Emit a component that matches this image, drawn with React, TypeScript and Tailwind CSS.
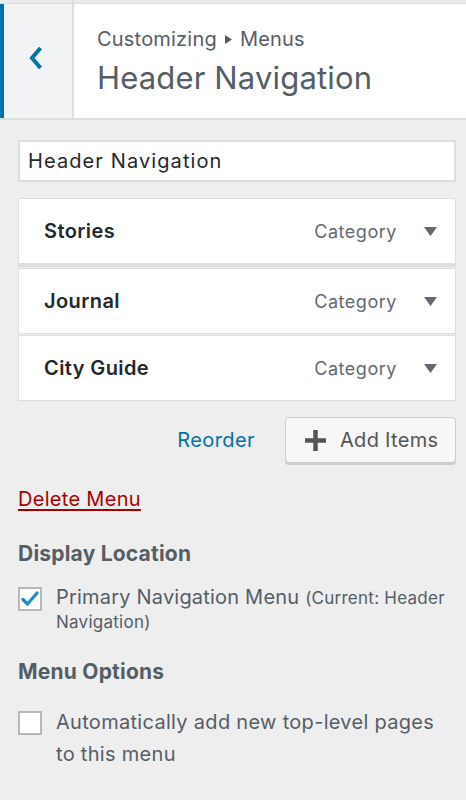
import React from 'react'

const font = { fontFamily: 'Inter, "Noto Sans", sans-serif' }

function MenuItem({ title }: { title: string }) {
  return (
    <div className="flex h-[66px] items-center border border-[#dddddd] bg-white pl-[25px] pr-[18px]">
      <span className="flex-1 text-[20px] font-semibold tracking-[0.02em] text-[#23282d]">{title}</span>
      <span className="text-[18px] tracking-[0.03em] text-[#646970]">Category</span>
      <svg className="ml-[27px] mt-[1px]" width="13" height="9" viewBox="0 0 13 9">
        <path d="M0 0 L13 0 L6.5 9 Z" fill="#646970" />
      </svg>
    </div>
  )
}

function Checkbox({ checked }: { checked?: boolean }) {
  return (
    <span className="mt-[1px] flex h-[24px] w-[24px] shrink-0 items-center justify-center border-2 border-[#b4b9be] bg-white">
      {checked && (
        <svg width="18" height="16" viewBox="0 0 18 16">
          <path d="M2 8.5 L6.5 13 L16 2" fill="none" stroke="#1e8cbe" strokeWidth="3.2" strokeLinecap="round" strokeLinejoin="round" />
        </svg>
      )}
    </span>
  )
}

export default function App() {
  return (
    <div className="h-[800px] w-[466px] overflow-hidden bg-[#eeeeee]" style={font}>
      {/* peek of the previous panel */}
      <div className="flex h-[4px] border-b border-[#dddddd] bg-[#e9e9e9]">
        <div className="w-[74px] border-r-2 border-[#dddddd]" />
      </div>

      {/* header */}
      <div className="flex h-[116px] border-b-2 border-[#dddddd] bg-white">
        <div className="flex w-[74px] items-center border-l-4 border-r-2 border-l-[#0073aa] border-r-[#dddddd] bg-[#f2f3f5] pb-[6px] pl-[24px]">
          <svg width="16" height="24" viewBox="0 0 16 24">
            <path d="M12.5 2 L4 12 L12.5 22" fill="none" stroke="#0073aa" strokeWidth="4" strokeLinejoin="miter" />
          </svg>
        </div>
        <div className="flex flex-col justify-center pl-[23px]">
          <div className="flex items-center text-[20px] leading-[26px] tracking-[0.01em] text-[#555d66]">
            Customizing
            <svg className="mx-[8px]" width="7" height="9" viewBox="0 0 7 9">
              <path d="M0 0 L7 4.5 L0 9 Z" fill="#555d66" />
            </svg>
            Menus
          </div>
          <div className="mt-[8px] text-[31px] leading-[36px] tracking-[0.005em] text-[#555d66]">Header Navigation</div>
        </div>
      </div>

      <div className="pl-[18px] pr-[10px] pt-[20px]">
        <div className="flex h-[42px] items-center border-2 border-[#dddddd] bg-white pl-[8px] text-[20px] tracking-[0.055em] text-[#23282d]">
          Header Navigation
        </div>

        <div className="mt-[16px] flex flex-col gap-[1px]">
          <div className="border-b-[3px] border-[#dddddd]">
            <MenuItem title="Stories" />
          </div>
          <MenuItem title="Journal" />
          <MenuItem title="City Guide" />
        </div>

        <div className="mt-[16px] flex items-center justify-end">
          <span className="mr-[30px] text-[20px] tracking-[0.02em] text-[#0073aa]">Reorder</span>
          <button className="flex h-[46px] w-[171px] items-center rounded-[4px] border border-[#cccccc] bg-[#f7f7f7] pl-[19px] text-[20px] tracking-[0.015em] text-[#555555] shadow-[0_2px_0_#cccccc]">
            <svg width="21" height="21" viewBox="0 0 21 21">
              <path d="M10.5 0 V21 M0 10.5 H21" stroke="#555555" strokeWidth="4.5" />
            </svg>
            <span className="ml-[14px]">Add Items</span>
          </button>
        </div>

        <div className="mt-[23px] text-[20px] leading-[26px] tracking-[0.015em] text-[#aa0000] underline decoration-[2px] underline-offset-[3px]">
          Delete Menu
        </div>

        <div className="mt-[29px] text-[21px] font-bold leading-[26px] tracking-[0.01em] text-[#555d66]">Display Location</div>
        <div className="mt-[19px] flex gap-[14px]">
          <Checkbox checked />
          <div className="text-[20px] leading-[23px] tracking-[0.01em] text-[#555d66]">
            Primary Navigation Menu <span className="text-[17px] tracking-[0.015em]">(Current: Header Navigation)</span>
          </div>
        </div>

        <div className="mt-[25px] text-[21px] font-bold leading-[26px] tracking-[0.01em] text-[#555d66]">Menu Options</div>
        <div className="mt-[25px] flex gap-[14px]">
          <Checkbox />
          <div className="-mt-[4px] text-[20px] leading-[32px] tracking-[0.015em] text-[#555d66]">
            Automatically add new top-level pages to this menu
          </div>
        </div>
      </div>
    </div>
  )
}
